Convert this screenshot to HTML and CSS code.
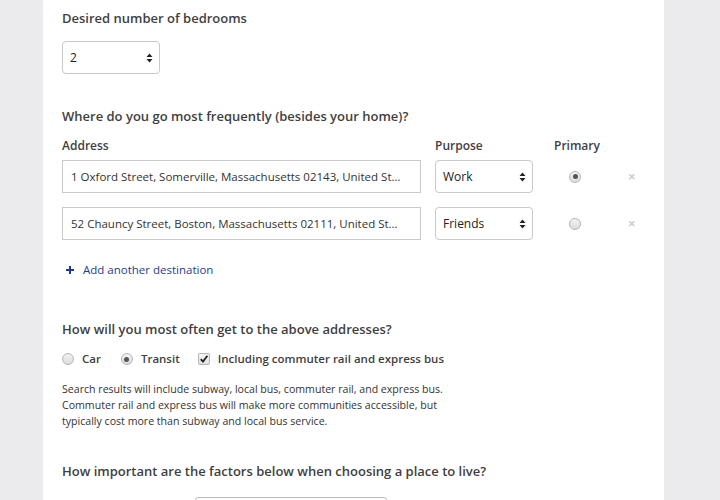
FILE: index.html
```html
<!DOCTYPE html>
<html lang="en">
<head>
<meta charset="utf-8">
<title>Preferences</title>
<link rel="stylesheet" href="styles.css">
</head>
<body>
<div class="page">
  <main class="panel">
    <section class="block block-bedrooms">
      <h2 class="q">Desired number of bedrooms</h2>
      <div class="select select-small">
        <span class="select-value">2</span>
        <svg class="arrows" width="7" height="10" viewBox="0 0 7 10"><path d="M3.5 0.5 L6.5 4 L0.5 4 Z M3.5 9.5 L6.5 6 L0.5 6 Z" fill="#222"/></svg>
      </div>
    </section>

    <section class="block block-dest">
      <h2 class="q">Where do you go most frequently (besides your home)?</h2>
      <div class="dest-grid">
        <div class="lbl col-addr">Address</div>
        <div class="lbl col-purpose">Purpose</div>
        <div class="lbl col-primary">Primary</div>
        <div class="col-x"></div>

        <div class="input col-addr">1 Oxford Street, Somerville, Massachusetts 02143, United St…</div>
        <div class="select col-purpose">
          <span class="select-value">Work</span>
          <svg class="arrows" width="7" height="10" viewBox="0 0 7 10"><path d="M3.5 0.5 L6.5 4 L0.5 4 Z M3.5 9.5 L6.5 6 L0.5 6 Z" fill="#222"/></svg>
        </div>
        <div class="col-primary cell-center"><span class="radio checked"></span></div>
        <div class="col-x cell-center"><span class="remove">✕</span></div>

        <div class="input col-addr">52 Chauncy Street, Boston, Massachusetts 02111, United St…</div>
        <div class="select col-purpose">
          <span class="select-value">Friends</span>
          <svg class="arrows" width="7" height="10" viewBox="0 0 7 10"><path d="M3.5 0.5 L6.5 4 L0.5 4 Z M3.5 9.5 L6.5 6 L0.5 6 Z" fill="#222"/></svg>
        </div>
        <div class="col-primary cell-center"><span class="radio"></span></div>
        <div class="col-x cell-center"><span class="remove">✕</span></div>
      </div>
      <a class="add-link" href="#">
        <svg width="8" height="8" viewBox="0 0 8 8"><path d="M3 0 H5 V3 H8 V5 H5 V8 H3 V5 H0 V3 H3 Z" fill="#1f3d8f"/></svg>
        <span>Add another destination</span>
      </a>
    </section>

    <section class="block block-mode">
      <h2 class="q">How will you most often get to the above addresses?</h2>
      <div class="mode-row">
        <label class="opt"><span class="radio"></span><span>Car</span></label>
        <label class="opt"><span class="radio checked"></span><span>Transit</span></label>
        <label class="opt"><span class="checkbox"><svg width="10" height="10" viewBox="0 0 10 10"><path d="M1.8 5.2 L4 7.6 L8.4 1.8" fill="none" stroke="#222" stroke-width="1.8"/></svg></span><span>Including commuter rail and express bus</span></label>
      </div>
      <p class="note">Search results will include subway, local bus, commuter rail, and express bus. Commuter rail and express bus will make more communities accessible, but typically cost more than subway and local bus service.</p>
    </section>

    <section class="block block-factors">
      <h2 class="q">How important are the factors below when choosing a place to live?</h2>
      <div class="factor-box"></div>
    </section>
  </main>
</div>
</body>
</html>
```

FILE: styles.css
```css
* { box-sizing: border-box; }
html, body { margin: 0; padding: 0; }
body {
  background: #ebebed;
  font-family: "Open Sans", "Noto Sans", sans-serif;
  color: #444;
  overflow: hidden;
}
.page {
  height: 500px;
  padding-left: 43px;
}
.panel {
  width: 621px;
  height: 100%;
  background: #fff;
  padding: 9px 0 0 19px;
}
.q {
  margin: 0;
  font-size: 13px;
  font-weight: 600;
  line-height: 18px;
  color: #3f3f3f;
}
.block-bedrooms .select-small { margin-top: 14px; width: 98px; }
.select {
  position: relative;
  height: 33px;
  border: 1px solid #c9c9c9;
  border-radius: 4px;
  display: flex;
  align-items: center;
  padding-left: 7px;
  font-size: 12px;
  color: #222;
  background: #fff;
}
.arrows { position: absolute; right: 6px; top: 11px; }

.block-dest { margin-top: 33px; }
.dest-grid {
  margin-top: 13px;
  display: grid;
  grid-template-columns: 359px 112px 63px 70px;
  row-gap: 14px;
}
.dest-grid .col-purpose { margin-left: 14px; }
.dest-grid .col-primary { margin-left: 21px; }
.lbl {
  font-size: 12px;
  font-weight: 600;
  line-height: 16px;
  color: #3f3f3f;
  margin-bottom: -8px;
}
.input {
  height: 33px;
  border: 1px solid #c9c9c9;
  display: flex;
  align-items: center;
  padding-left: 8px;
  font-size: 11.5px;
  color: #333;
  white-space: nowrap;
  overflow: hidden;
}
.cell-center { display: flex; align-items: center; }
.col-primary.cell-center { padding-left: 15px; }
.col-x.cell-center { padding-left: 32px; }
.radio {
  display: inline-block;
  width: 12px;
  height: 12px;
  border-radius: 50%;
  border: 1px solid #b5b5b5;
  background: linear-gradient(#f3f3f3, #dcdcdc);
  position: relative;
  flex: none;
}
.radio.checked::after {
  content: "";
  position: absolute;
  left: 2.5px; top: 2.5px;
  width: 5px; height: 5px;
  border-radius: 50%;
  background: #555;
}
.remove {
  font-size: 9px;
  color: #c8c8c8;
  font-weight: 700;
  line-height: 1;
}
.add-link {
  display: flex;
  align-items: center;
  gap: 9px;
  margin-top: 22px;
  margin-left: 4px;
  font-size: 11.5px;
  color: #1f3d8f;
  text-decoration: none;
  line-height: 16px;
}

.block-mode { margin-top: 42px; }
.mode-row {
  display: flex;
  align-items: center;
  margin-top: 13px;
  font-size: 11.5px;
  font-weight: 600;
  color: #3f3f3f;
  line-height: 16px;
}
.opt { display: flex; align-items: center; gap: 8px; }
.opt:first-child { margin-right: 20px; }
.opt:nth-child(2) { margin-right: 18px; }
.checkbox {
  width: 12px; height: 12px;
  border: 1px solid #b5b5b5;
  border-radius: 2px;
  background: linear-gradient(#f7f7f7, #e2e2e2);
  display: flex; align-items: center; justify-content: center;
  flex: none;
}
.note {
  margin: 14px 0 0;
  width: 395px;
  font-size: 10.6px;
  line-height: 16px;
  color: #333;
}
.block-factors { margin-top: 33px; }
.factor-box {
  margin-top: 17px;
  margin-left: 133px;
  width: 192px;
  height: 20px;
  border: 1px solid #bbb;
  border-radius: 3px;
}
```
